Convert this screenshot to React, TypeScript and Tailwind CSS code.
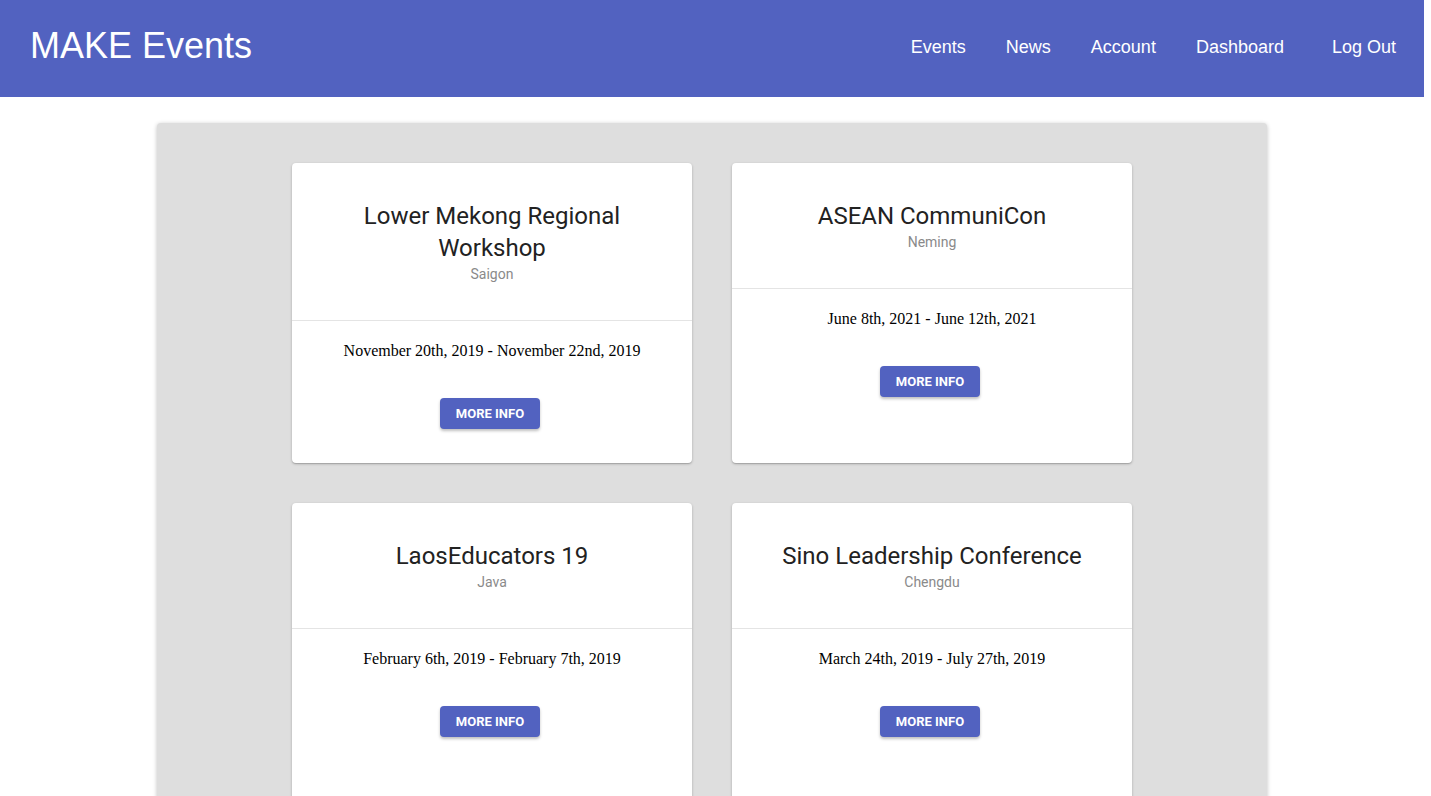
import React from 'react'

interface EventItem {
  title: string
  location: string
  dates: string
}

const events: EventItem[] = [
  { title: 'Lower Mekong Regional Workshop', location: 'Saigon', dates: 'November 20th, 2019 - November 22nd, 2019' },
  { title: 'ASEAN CommuniCon', location: 'Neming', dates: 'June 8th, 2021 - June 12th, 2021' },
  { title: 'LaosEducators 19', location: 'Java', dates: 'February 6th, 2019 - February 7th, 2019' },
  { title: 'Sino Leadership Conference', location: 'Chengdu', dates: 'March 24th, 2019 - July 27th, 2019' },
]

const navLinks = ['Events', 'News', 'Account', 'Dashboard']

function EventCard({ event }: { event: EventItem }) {
  return (
    <div className="w-[400px] h-[300px] bg-white rounded-[4px] shadow-[0_1px_3px_rgba(0,0,0,0.2),0_1px_1px_rgba(0,0,0,0.14)] overflow-hidden flex flex-col">
      <div className="pt-[37px] pb-[36px] px-10 text-center border-b border-[#e4e4e4] font-['Roboto',sans-serif]">
        <h2 className="text-[24px] leading-[32px] text-[#222]">{event.title}</h2>
        <p className="text-[14px] leading-[20px] text-[#8a8a8a]">{event.location}</p>
      </div>
      <div className="flex flex-col items-center pt-[20px]">
        <p className="text-[16px] leading-[20px] text-black font-['Liberation_Serif',serif]">{event.dates}</p>
        <button className="mt-[37px] mr-[4px] w-[100px] h-[31px] rounded-[4px] bg-[#5262c0] text-white text-[13px] font-bold uppercase shadow-[0_2px_3px_rgba(0,0,0,0.25)] font-['Roboto',sans-serif]">
          More Info
        </button>
      </div>
    </div>
  )
}

export default function App() {
  return (
    <div className="w-[1424px] min-h-screen bg-white">
      <header className="h-[97px] bg-[#5262c0] flex items-center justify-between pl-[30px] pr-[28px] text-white font-['Liberation_Sans',Arial,sans-serif]">
        <h1 className="text-[36px] leading-none -mt-[5px]">MAKE Events</h1>
        <nav className="flex items-center text-[18px] -mt-[2px]">
          {navLinks.map((link) => (
            <a key={link} className="ml-[40px]">{link}</a>
          ))}
          <a className="ml-[48px]">Log Out</a>
        </nav>
      </header>
      <main className="mx-auto mt-[26px] w-[1110px] bg-[#dedede] rounded-[4px] shadow-[0_1px_4px_rgba(0,0,0,0.25)] py-[40px]">
        <div className="grid grid-cols-[400px_400px] gap-[40px] justify-center">
          {events.map((event) => (
            <EventCard key={event.title} event={event} />
          ))}
        </div>
      </main>
    </div>
  )
}
